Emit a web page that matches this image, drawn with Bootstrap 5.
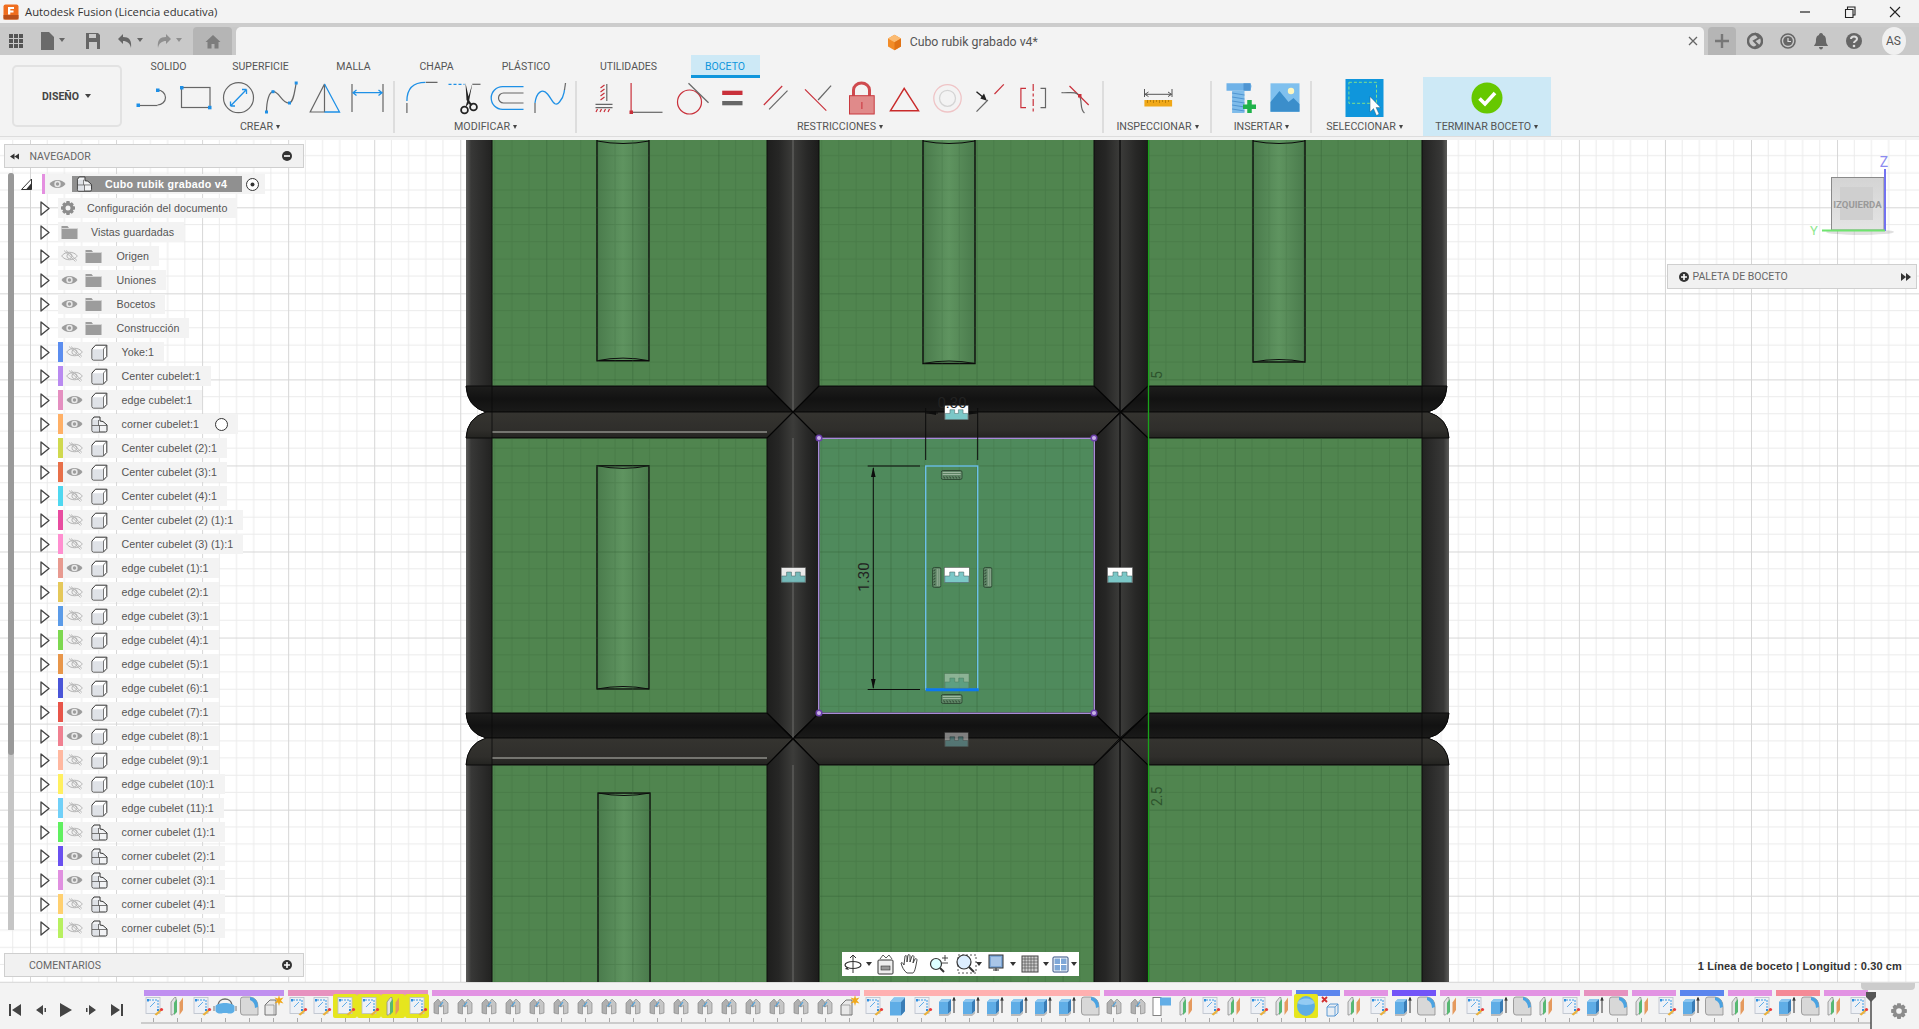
<!DOCTYPE html>
<html lang="es">
<head>
<meta charset="utf-8">
<title>Autodesk Fusion</title>
<link href="https://cdn.jsdelivr.net/npm/bootstrap@5.3.0/dist/css/bootstrap.min.css" rel="stylesheet">
<style>
html,body{height:100%;overflow:hidden}
body{background:#f3f3f3;font-family:"Liberation Sans",Arial,sans-serif;color:#555}
.titlebar{height:23px;flex:none;background:#f3f3f3;font:11.3px "Open Sans","Liberation Sans",sans-serif;color:#333;padding-left:3px}
.titlebar .wtxt{margin-left:6px}
.winbtns{margin-left:auto}
.winbtns svg{width:14px;height:14px;display:block}
.winbtns{gap:31px;padding-right:17px}
.band{height:4px;flex:none;background:#ccc}
.tabrow{height:28px;flex:none;background:#c9c9c9}
.qa{width:236px;flex:none;padding-left:8px}
.qa svg{display:block}
.sv1{margin-left:19px}
.rd1{margin-left:9px}
.homet{width:39px;height:28px;background:#b5b5b5;border-radius:4px 4px 0 0;margin-left:auto;margin-right:4px}
.doct{flex:1;background:#f3f3f3;border-radius:5px 5px 0 0;position:relative;font:12.3px Roboto,sans-serif;color:#555;padding-right:15px;padding-top:2px}
.doct .xclose{position:absolute;right:6px;top:9px}
.plust{width:28px;height:28px;background:#b5b5b5;border-radius:4px 4px 0 0;margin-left:4px}
.rtools{width:183.5px;flex:none;padding-left:11px;gap:17px}
.avatar{width:24px;height:28px;border-radius:50%;background:#f0f0f0;font:12px Roboto,sans-serif;color:#555;margin-left:3px}
.toolbar{height:82px;flex:none;background:#f3f3f3;border-bottom:1px solid #ddd;position:relative}
.tgap{height:3px;flex:none;background:#f3f3f3}
.designbtn{width:110px;height:62px;margin:10px 0 0 11.5px;border:2px solid #e2e2e2;border-radius:5px;background:#f3f3f3;font:bold 10.5px Roboto,sans-serif;color:#444;flex:none;padding:0}
.caret-d{display:inline-block;border-left:3px solid transparent;border-right:3px solid transparent;border-top:4px solid #444;margin-left:6px;vertical-align:2px}
.rcol{flex:none}
.rtabs{height:22px;margin-left:1px;font:10.5px Roboto,sans-serif;flex-wrap:nowrap}
.rtabs li{text-align:center;line-height:23px;color:#555}
.rtabs li:nth-child(1){width:92px}
.rtabs li:nth-child(2){width:92px}
.rtabs li:nth-child(3){width:94px}
.rtabs li:nth-child(4){width:72px}
.rtabs li:nth-child(5){width:107px}
.rtabs li:nth-child(6){width:98px;margin-right:13px}
.rtabs li:nth-child(7){width:69px;background:#cde9f6;color:#0f96dc;border-bottom:3px solid #0f96dc;height:23px}
.ribbon{padding-left:9.5px;height:59px}
.rgrp{flex:none;padding-top:3px}
.rgrp .ics{height:36px}
.rlbl{font:10.7px Roboto,sans-serif;color:#555;text-align:center;line-height:14px;margin-top:4px;white-space:nowrap}
.ccar{display:inline-block;border-left:2.5px solid transparent;border-right:2.5px solid transparent;border-top:4px solid #444;margin-left:3px;vertical-align:1px}
.ri{width:43px;height:36px;overflow:visible;display:block;flex:none}
.rsep{width:2px;flex:none;background:#ddd;margin:4px 5px 3px 3.5px}
.w1{width:258px}.w2{width:172px}.w3{width:516px}.w4{width:98px}.w5{width:89px}.w6{width:96px}
.w5 .ics{padding-left:3px}
.finish{width:128.5px;margin-left:10px;background:#cde9f6;flex:none}
.finish .ics{padding-top:2px}
.g{stroke:#666;fill:none;stroke-width:1.2}
.bl{stroke:#1e90e6;fill:none;stroke-width:1.3}
.rd{stroke:#c9303a;fill:none;stroke-width:1.2}
.bs{fill:#1e8fe6}
.main{flex:1;position:relative;overflow:hidden;background:#fff;min-height:0}
.scene{position:absolute;left:0;top:0;width:1919px;height:842px;display:block}
.panelhd{position:absolute;left:4px;width:300px;height:24px;background:#f1f1f1;border:1px solid #cfcfcf;font:10.5px Roboto,sans-serif;color:#666;padding:0 11px 0 4.5px}
.navh{top:4px}
.navh span{margin-left:11px}
.comh{top:813px;padding-left:24px}
.palh{position:absolute;left:1666.5px;top:124px;width:250px;height:25px;background:#f1f1f1;border:1px solid #cfcfcf;font:10.5px Roboto,sans-serif;color:#666;padding:0 5px 0 11px}
.tree{position:absolute;left:0;top:34px;font-size:10.7px;letter-spacing:.05px;color:#555}
.tbar{position:absolute;left:8px;top:33px;width:6px;height:757px;background:#c5c5c5;border-radius:3px 3px 0 0}
.tbar i{display:block;height:582px;background:#999;border-radius:3px}
.trow{height:20px;margin-bottom:4px;margin-left:40px;white-space:nowrap}
.trow .car{width:10px;height:15px;margin-right:8px;flex:none}
.tb{height:20px;background:#f3f3f3;padding-right:10px}
.cbar{width:5px;height:20px;flex:none}
.eye0{width:17px;height:12px;margin-left:2.5px;flex:none}
.bd0{width:17px;height:17px;margin-left:8px;margin-right:14px;flex:none}
.fe{width:17px;height:12px;margin-left:3px;flex:none}
.fo{width:17px;height:15px;margin-left:7px;margin-right:14.5px;flex:none}
.fo2{width:17px;height:15px;margin-left:3px;margin-right:13px;flex:none}
.ge{width:16px;height:16px;margin-left:2px;margin-right:11px;flex:none}
.rootrow{height:20px;margin-bottom:4px;margin-left:21px}
.rootcar{width:11px;height:12px;margin-right:10px;flex:none}
.rootb{height:20px;background:#f3f3f3;width:223px}
.rootsel{width:170px;height:16px;background:#909090;color:#fff;font-weight:bold;letter-spacing:.28px;margin-left:6px;flex:none}
.rootsel span{margin-left:12px}
.navbar3d{position:absolute;left:842px;top:812px;width:237px;height:24px;background:#fff;gap:0;padding-left:0}
.statusx{position:absolute;right:17px;top:820px;font:bold 11px "Liberation Sans",sans-serif;color:#333;white-space:nowrap;letter-spacing:.13px}
.tline{height:47px;flex:none;background:#f3f3f3;border-top:1px solid #ddd;position:relative}
.tctl{width:144px;flex:none;padding:19px 0 0 8px;gap:9px}
.tctl svg{width:16px;height:16px;display:block;flex:none}
.ttrack{width:1730px;flex:none;position:relative;padding-top:7px}
.tbars{gap:4px;height:6px}
.tbars span{display:block;height:6px;flex:none}
.n2{width:44px}.n6{width:140px}.n8{width:188px}.n10{width:236px}.n18{width:428px}
.ticons{margin-top:-2px;margin-left:-3px;height:30px;border-bottom:2px solid #ccc;width:1730px;position:relative}
.ti{width:24.03px;height:24px;flex:none;position:relative;display:block}
.ti svg{width:24px;height:24px;display:block}
.ti::after{content:"";position:absolute;left:11.5px;top:24px;width:1px;height:4px;background:#aaa}
.ti.hl{background:#e6e61e;border-radius:2px}
.playh{position:absolute;left:1864.5px;top:9px;width:12px;height:38px}
.gearx{margin-left:16px;margin-top:19px;width:18px;height:18px;flex:none}
.thumb{position:absolute;left:1861px;top:0;width:54px;height:7px;background:#ccc;border-radius:0 0 4px 4px}
</style>
</head>
<body class="d-flex flex-column vh-100 m-0">

<svg width="0" height="0" class="position-absolute">
<defs>
<symbol id="eye" viewBox="0 0 17 12"><path d="M.5 6C4 .8 13 .8 16.5 6 13 11.2 4 11.2.5 6Z" fill="#9c9c9c"/><circle cx="8.5" cy="6" r="3.2" fill="#e8e8e8"/><circle cx="8.5" cy="6" r="1.7" fill="#9c9c9c"/></symbol>
<symbol id="eyo" viewBox="0 0 17 12"><path d="M.7 6C4 1 13 1 16.3 6 13 11 4 11 .7 6Z" fill="none" stroke="#b5b5b5" stroke-width="1"/><circle cx="8.5" cy="6" r="2.6" fill="none" stroke="#b5b5b5"/><path d="M3 .5 14.500 11.500M5 .5 16 10.500" stroke="#b5b5b5" stroke-width=".9"/></symbol>
<symbol id="bx" viewBox="0 0 17 17"><path d="M1 5 4.500 1.200H15.800V12.500L12.500 16H2.500Q1 16 1 14.500Z" fill="#fff" stroke="#333" stroke-width="1" stroke-linejoin="round"/><path d="M1.500 5.300H12.500V15.500H2.500Q1.500 15.500 1.500 14.500Z" fill="#dfe2e7"/><path d="M12.500 5 15.800 1.500M12.500 5V16" fill="none" stroke="#555" stroke-width=".8"/></symbol>
<symbol id="cn" viewBox="0 0 17 17"><path d="M1 3.500 3 1H9V5L12 5.500 16 9V14.500Q16 16 14.500 16H2.500Q1 16 1 14.500Z" fill="#f2f3f5" stroke="#333" stroke-width="1" stroke-linejoin="round"/><path d="M1.500 9.500H8.500V15.500H2.500Q1.500 15.500 1.500 14.500ZM1.500 4H7.500V9H1.500Z" fill="#dfe2e7"/><path d="M1 9.500H16M8.500 9.500V16M7.500 4V9.500" fill="none" stroke="#555" stroke-width=".8"/></symbol>
<symbol id="fld" viewBox="0 0 17 15"><path d="M.5 1H6.500L8 3H16.500V14H.5Z" fill="#9c9c9c"/><path d="M.5 3.500H16.500" stroke="#eee" stroke-width=".7"/></symbol>
<symbol id="car" viewBox="0 0 10 15"><path d="M1 1 9 7.500 1 14Z" fill="#fff" stroke="#444" stroke-width="1.300" stroke-linejoin="round"/></symbol>
<symbol id="gear" viewBox="0 0 16 16"><path d="M6.500 1H9.500L10 3.200 11.800 2.200 13.800 4.200 12.800 6 15 6.500V9.500L12.800 10 13.800 11.800 11.800 13.800 10 12.800 9.500 15H6.500L6 12.800 4.200 13.800 2.200 11.800 3.200 10 1 9.500V6.500L3.200 6 2.200 4.200 4.200 2.200 6 3.200ZM8 5.500A2.500 2.500 0 1 0 8 10.500 2.500 2.500 0 1 0 8 5.500Z" fill="#8c8c8c" fill-rule="evenodd"/></symbol>

<symbol id="tsk" viewBox="0 0 24 24"><rect x="5" y="3.500" width="14" height="16" fill="#eef1f6" stroke="#b9bfca" stroke-width=".8"/><path d="M7 8V6H17V16" fill="none" stroke="#3b9ae4" stroke-width="1" stroke-dasharray="2 1"/><path d="M9 13 14 8" stroke="#3b9ae4" stroke-width=".8"/><rect x="6" y="5" width="2" height="2" fill="#2f8fe0"/><rect x="16" y="15" width="2" height="2" fill="#2f8fe0"/><path d="M13.500 20.500 19 15.500 20.500 17 15.500 21.500Z" fill="#eab13c"/><circle cx="20.500" cy="15.500" r="1.600" fill="#ea3c3c"/></symbol>
<symbol id="tsp" viewBox="0 0 24 24"><path d="M6 8 9.500 3.500H11V17L7.500 21H6Z" fill="#e2e3e5" stroke="#8e8e8e" stroke-width=".8"/><path d="M9 8.500 12 5V18L9 21Z" fill="#58b873"/><path d="M14.500 8.500 18 3.500V16L14.500 21Z" fill="#e59a5e"/></symbol>
<symbol id="tdm" viewBox="0 0 24 24"><path d="M5 11C6 3 18 3 19 11" fill="none" stroke="#6a6a6a" stroke-width="1.400"/><path d="M2.500 12C5 8 19 8 21.500 12V17C20 20 16 20 14 19H10C8 20 4 20 2.500 17Z" fill="#5daee6"/><path d="M1 12V17M23 12V17" stroke="#777"/></symbol>
<symbol id="tfl" viewBox="0 0 24 24"><path d="M3.500 5.500Q3.500 3 6 3H13Q21 4 21 13V21H6Q3.500 21 3.500 18Z" fill="#d8d8d8" stroke="#8a8a8a" stroke-width=".8"/><path d="M13 3Q21 4 21 13L18 14Q18 8 13 6Z" fill="#4aa3e2"/></symbol>
<symbol id="tst" viewBox="0 0 24 24"><path d="M4 11 9 6H15V21H4Z" fill="#e8e8e8" stroke="#666" stroke-width=".9"/><path d="M4 11H13V21" fill="none" stroke="#888" stroke-width=".7"/><path d="M18 1 19 4.500 22.500 3.500 20 6.500 22.500 9.500 19 8.500 18 12 17 8.500 13.500 9.500 16 6.500 13.500 3.500 17 4.500Z" fill="#f0a81a"/></symbol>
<symbol id="tm" viewBox="0 0 24 24"><path d="M5 19V9L9 5 12 8.500V13L9.500 11.500V20Z" fill="#b0b0b0" stroke="#8a8a8a" stroke-width=".7" stroke-linejoin="round"/><path d="M19 19V9L15 5 12 8.500V13L14.500 11.500V20Z" fill="#c6c6c6" stroke="#8a8a8a" stroke-width=".7" stroke-linejoin="round"/><path d="M10.500 12.500 14 8" stroke="#4aa3e2" stroke-width="1.100"/></symbol>
<symbol id="tcb" viewBox="0 0 24 24"><path d="M5 8 9 3.500H20V17L16 21.500H5Z" fill="#5fade6"/><path d="M16 8V21.500L20 17V3.500Z" fill="#3a7db6"/><path d="M5 8H16L20 3.500H9Z" fill="#8cc6ef"/></symbol>
<symbol id="tex" viewBox="0 0 24 24"><path d="M5 8 8 5H17V17L14 20H5Z" fill="#5fade6"/><path d="M14 8V20L17 17V5Z" fill="#3a7db6"/><path d="M5 8H14L17 5H8Z" fill="#8cc6ef"/><path d="M5 20H14L17 17V19.500L14 22H5Z" fill="#bbb"/><path d="M20 19V5M18.800 6.500 20 3.500 21.200 6.500" stroke="#333" stroke-width="1" fill="#333"/></symbol>
<symbol id="tfg" viewBox="0 0 24 24"><rect x="3" y="3.500" width="8" height="18" fill="#fff" stroke="#777" stroke-width=".9"/><rect x="10" y="3.500" width="11" height="8" fill="#63aee6"/></symbol>
<symbol id="tsh" viewBox="0 0 24 24"><ellipse cx="12" cy="12" rx="9" ry="10" fill="#5fade6"/><path d="M3.500 9C5 3 19 3 20.500 9 18 11.500 6 11.500 3.500 9Z" fill="#93cbf3"/></symbol>
<symbol id="tdl" viewBox="0 0 24 24"><path d="M4 3 9 8M9 3 4 8" stroke="#d23030" stroke-width="1.800"/><path d="M9 13 12 10H20V19L17 22H9Z" fill="#e9eef3" stroke="#4a8fd0" stroke-width=".9"/><path d="M9 13H17V22M17 13 20 10" fill="none" stroke="#4a8fd0" stroke-width=".8"/></symbol>

<symbol id="tag" viewBox="0 0 26 16"><rect x=".5" y=".5" width="25" height="15" fill="#fff" stroke="#555" stroke-width=".5"/><path d="M1 15.500V9H6V5H11V9H15V5H20V9H25V15.500Z" fill="#7cc8c8" stroke="#3d5a5a" stroke-width=".5"/></symbol>
<symbol id="hz" viewBox="0 0 22 10"><rect x=".5" y=".5" width="21" height="9" rx="2" fill="#5e8465" stroke="#2b4631" stroke-width=".9"/><path d="M2 2.500H20M2 4.500H20" stroke="#b9cbb9" stroke-width=".7"/><path d="M3 6.500 4 8.500M6 6.500 7 8.500M9 6.500 10 8.500M12 6.500 13 8.500M15 6.500 16 8.500M18 6.500 19 8.500" stroke="#1f3525" stroke-width=".8"/></symbol>
<symbol id="vt" viewBox="0 0 10 22"><rect x=".5" y=".5" width="9" height="21" rx="2" fill="#5e8465" stroke="#2b4631" stroke-width=".9"/><path d="M7.500 2V20M5.500 2V20" stroke="#b9cbb9" stroke-width=".7"/><path d="M3.500 3 1.500 4M3.500 6 1.500 7M3.500 9 1.500 10M3.500 12 1.500 13M3.500 15 1.500 16M3.500 18 1.500 19" stroke="#1f3525" stroke-width=".8"/></symbol>

<pattern id="gridP" patternUnits="userSpaceOnUse" x="30" y="207.300" width="86.050" height="86.050">
<path d="M17.200 0V86.050M34.400 0V86.050M51.600 0V86.050M68.800 0V86.050M0 17.200H86.050M0 34.400H86.050M0 51.600H86.050M0 68.800H86.050" stroke="#ebebeb" stroke-width="1"/>
<path d="M.5 0V86.050M0 .5H86.050" stroke="#d6d6d6" stroke-width="1"/>
</pattern>
<pattern id="gridG" patternUnits="userSpaceOnUse" x="30" y="207.300" width="86.050" height="86.050">
<path d="M17.200 0V86.050M34.400 0V86.050M51.600 0V86.050M68.800 0V86.050M0 17.200H86.050M0 34.400H86.050M0 51.600H86.050M0 68.800H86.050" stroke="#2c5a2f" stroke-opacity=".22" stroke-width="1"/>
<path d="M.5 0V86.050M0 .5H86.050" stroke="#2c5a2f" stroke-opacity=".4" stroke-width="1"/>
</pattern>
<linearGradient id="vL" x1="0" x2="1" y1="0" y2="0"><stop offset="0" stop-color="#1e1e1d"/><stop offset=".45" stop-color="#262625"/><stop offset="1" stop-color="#3c3c3a"/></linearGradient>
<linearGradient id="vR" x1="0" x2="1" y1="0" y2="0"><stop offset="0" stop-color="#3c3c3a"/><stop offset=".55" stop-color="#282827"/><stop offset="1" stop-color="#1c1c1b"/></linearGradient>
<linearGradient id="vE" x1="0" x2="1" y1="0" y2="0"><stop offset="0" stop-color="#5c5c5a"/><stop offset=".2" stop-color="#383837"/><stop offset="1" stop-color="#222221"/></linearGradient>
<linearGradient id="vF" x1="0" x2="1" y1="0" y2="0"><stop offset="0" stop-color="#222221"/><stop offset=".8" stop-color="#383837"/><stop offset="1" stop-color="#5c5c5a"/></linearGradient>
<linearGradient id="hT" x1="0" x2="0" y1="0" y2="1"><stop offset="0" stop-color="#1d1d1c"/><stop offset=".5" stop-color="#121212"/><stop offset="1" stop-color="#1a1a19"/></linearGradient>
<linearGradient id="hB" x1="0" x2="0" y1="0" y2="1"><stop offset="0" stop-color="#353430"/><stop offset=".7" stop-color="#2f2e2b"/><stop offset="1" stop-color="#232320"/></linearGradient>
<linearGradient id="slotG" x1="0" x2="1" y1="0" y2="0"><stop offset="0" stop-color="#4a7b4c"/><stop offset=".5" stop-color="#5f9460"/><stop offset="1" stop-color="#4a7b4c"/></linearGradient>
<linearGradient id="cubeG" x1="0" x2="0" y1="0" y2="1"><stop offset="0" stop-color="#d4d4d4"/><stop offset="1" stop-color="#e4e4e4"/></linearGradient>
</defs>
</svg>

<header class="titlebar d-flex align-items-center">
<svg width="16" height="16" viewBox="0 0 16 16"><rect x=".5" y=".5" width="15" height="15" rx="2" fill="#ef6d1e"/><rect x=".5" y="11" width="15" height="4.500" fill="#b9501a"/><path d="M5 3H11V5H7.300V6.500H10.500V8.500H7.300V10.500H5Z" fill="#fff"/></svg>
<span class="wtxt">Autodesk Fusion (Licencia educativa)</span>
<div class="winbtns d-flex align-items-center">
<svg viewBox="0 0 14 14"><path d="M2 7H12" stroke="#222" stroke-width="1.200"/></svg>
<svg viewBox="0 0 14 14"><path d="M2.500 4.500H10V12.500H2.500ZM4.500 4.500V2H12V10H10" fill="none" stroke="#222" stroke-width="1.100"/></svg>
<svg viewBox="0 0 14 14"><path d="M2 2 12 12M12 2 2 12" stroke="#222" stroke-width="1.100"/></svg>
</div>
</header>
<div class="band"></div>
<div class="tabrow d-flex">
<div class="qa d-flex align-items-center">
<svg width="16" height="16" viewBox="0 0 16 16"><path d="M1 1h4v4H1zM6 1h4v4H6zM11 1h4v4h-4zM1 6h4v4H1zM6 6h4v4H6zM11 6h4v4h-4zM1 11h4v4H1zM6 11h4v4H6zM11 11h4v4h-4z" fill="#555"/></svg>
<svg class="ms-3" width="26" height="20" viewBox="0 0 26 20"><path d="M1 1H9L14 6V19H1Z" fill="#6a6a6a"/><path d="M19 7H25L22 11Z" fill="#666"/></svg>
<svg class="sv1" width="16" height="18" viewBox="0 0 16 18"><path d="M1 1H13L15 3V17H1Z" fill="#666"/><rect x="4" y="2" width="7" height="4" fill="#c9c9c9"/><rect x="4" y="10" width="8" height="7" fill="#c9c9c9"/></svg>
<svg class="ms-3" width="30" height="18" viewBox="0 0 30 18"><path d="M1 7 6 2V5C12 5 15 8 14 16 13 11 10 9 6 9V12Z" fill="#666"/><path d="M20 6H26L23 10Z" fill="#666"/></svg>
<svg class="rd1" width="30" height="18" viewBox="0 0 30 18"><path d="M15 7 10 2V5C4 5 1 8 2 16 3 11 6 9 10 9V12Z" fill="#8f8f8f"/><path d="M20 6H26L23 10Z" fill="#8f8f8f"/></svg>
<div class="homet d-flex align-items-center justify-content-center"><svg width="16" height="15" viewBox="0 0 16 15"><path d="M8 1 15.500 8H13.500V14.500H9.500V10H6.500V14.500H2.500V8H.5Z" fill="#7d7d7d"/></svg></div>
</div>
<div class="doct d-flex align-items-center justify-content-center">
<svg class="me-1" width="15" height="17" viewBox="0 0 15 17"><path d="M7.500.8 14 4.500V12.500L7.500 16.200 1 12.500V4.500Z" fill="#f28c28"/><path d="M7.500.8 14 4.500 7.500 8.200 1 4.500Z" fill="#fbbb72"/><path d="M7.500 8.200V16.200L14 12.500V4.500Z" fill="#e07316"/></svg>
<span class="ms-1">Cubo rubik grabado v4*</span>
<svg class="xclose" width="10" height="10" viewBox="0 0 10 10"><path d="M1 1 9 9M9 1 1 9" stroke="#666" stroke-width="1.300"/></svg>
</div>
<div class="plust d-flex align-items-center justify-content-center"><svg width="14" height="14" viewBox="0 0 14 14"><path d="M7 0V14M0 7H14" stroke="#777" stroke-width="2.400"/></svg></div>
<div class="rtools d-flex align-items-center">
<svg width="16" height="18" viewBox="0 0 16 18"><circle cx="8" cy="9" r="7" fill="none" stroke="#666" stroke-width="2.400"/><path d="M8 1 12 6 7 9 11 13 7 16" fill="none" stroke="#666" stroke-width="2"/></svg>
<svg width="16" height="18" viewBox="0 0 16 18"><circle cx="8" cy="9" r="7" fill="none" stroke="#666" stroke-width="1.600"/><circle cx="8" cy="9" r="4.800" fill="#666"/><path d="M8 6V9.500H11" fill="none" stroke="#ddd" stroke-width="1.200"/></svg>
<svg width="16" height="18" viewBox="0 0 16 18"><path d="M8 1C9.500 1 10 2 10 3 13 4 13 7 13 9 13 12 15 13 15 14H1C1 13 3 12 3 9 3 7 3 4 6 3 6 2 6.500 1 8 1ZM6 15H10C10 16.500 9 17.500 8 17.500S6 16.500 6 15Z" fill="#666"/></svg>
<svg width="16" height="18" viewBox="0 0 16 18"><circle cx="8" cy="9" r="8" fill="#666"/><path d="M5 7C5 3.500 11 3.500 11 7 11 9 8 9 8 11" fill="none" stroke="#ddd" stroke-width="2"/><circle cx="8" cy="14" r="1.300" fill="#ddd"/></svg>
<div class="avatar d-flex align-items-center justify-content-center">AS</div>
</div>
</div>

<section class="toolbar d-flex">
<button type="button" class="designbtn">DISEÑO<span class="caret-d"></span></button>
<div class="rcol">
<ul class="nav rtabs">
<li>SOLIDO</li><li>SUPERFICIE</li><li>MALLA</li><li>CHAPA</li><li>PLÁSTICO</li><li>UTILIDADES</li><li>BOCETO</li>
</ul>
<div class="ribbon d-flex">
<div class="rgrp w1">
<div class="ics d-flex">
<svg class="ri" viewBox="-1.500 0 43 36"><path class="g" d="M6 25.500H25"/><path class="g" d="M25 10A8 7.500 0 0 1 25 25"/><rect class="bs" x="4" y="23.500" width="3.500" height="3.500"/><rect class="bs" x="23.500" y="8.500" width="3.500" height="3.500"/></svg>
<svg class="ri" viewBox="-1.500 0 43 36"><rect class="g" x="6" y="7.500" width="28.500" height="20"/><rect class="bs" x="4.500" y="6" width="3.500" height="3.500"/><rect class="bs" x="32.500" y="25.800" width="3.500" height="3.500"/></svg>
<svg class="ri" viewBox="-1.500 0 43 36"><circle class="g" cx="20" cy="17.700" r="15"/><path class="bl" d="M12 26 28 9.500M28 9.500H23.500M28 9.500V14M12 26H16.500M12 26V21.500"/></svg>
<svg class="ri" viewBox="-1.500 0 43 36"><path class="g" d="M5 32C5 20 8 12 11.500 11.700 18 11 20 24 28 23 32 22 33 12 34.700 3"/><rect class="bs" x="3.500" y="30.500" width="3" height="3"/><rect class="bs" x="10" y="10.200" width="3" height="3"/><rect class="bs" x="26.500" y="21.500" width="3" height="3"/><rect class="bs" x="33.200" y="1.500" width="3" height="3"/></svg>
<svg class="ri" viewBox="-1.500 0 43 36"><path class="g" d="M20 4 5.700 32H20Z"/><path class="bl" d="M20 4 35 32H20"/></svg>
<svg class="ri" viewBox="-1.500 0 43 36"><path class="g" d="M4.500 4V32M35.500 4V32"/><path class="bl" d="M5.500 12.700H34.500M9 10 5.500 12.700 9 15.400M31 10 34.500 12.700 31 15.400"/></svg>
</div>
<div class="rlbl">CREAR<span class="ccar"></span></div>
</div>
<div class="rsep"></div>
<div class="rgrp w2">
<div class="ics d-flex">
<svg class="ri" viewBox="-1.500 0 43 36"><path class="bl" d="M5.400 21Q5.400 2.300 24 2.300"/><path class="g" d="M24.500 2.300H36M5.400 23V33"/></svg>
<svg class="ri" viewBox="-1.500 0 43 36"><path class="bl" d="M4 4.300H20" stroke-dasharray="3 2"/><path class="g" d="M28 4.300H36"/><path d="M21 3 25 21 28 25 26 26 22 20ZM28 3 26 13 24 24 21 27 23 20Z" fill="#222"/><circle cx="20" cy="30" r="3.400" fill="none" stroke="#222" stroke-width="1.800"/><circle cx="29" cy="27" r="3.400" fill="none" stroke="#222" stroke-width="1.800"/></svg>
<svg class="ri" viewBox="-1.500 0 43 36"><path class="bl" stroke-width="1.600" d="M36 6.700H15A11.300 11.300 0 0 0 15 29.300H36"/><path class="g" d="M36 13H16A5 5 0 0 0 16 23H36"/></svg>
<svg class="ri" viewBox="-1.500 0 43 36"><path class="g" d="M4.500 33V23"/><path class="bl" d="M4.500 23C6 12 12 8 17 14S24 28 29 22 33 14 34 10"/><path class="g" d="M34 10 35 3"/></svg>
</div>
<div class="rlbl">MODIFICAR<span class="ccar"></span></div>
</div>
<div class="rsep"></div>
<div class="rgrp w3">
<div class="ics d-flex">
<svg class="ri" viewBox="-1.500 0 43 36"><path class="g" d="M23.300 4V21"/><path class="rd" d="M21 5 17 8M21 9 17 12M21 13 17 16M21 17 17 20"/><path d="M12 24.300H29M12 27.700H29" stroke="#666" stroke-width="1.300"/><path class="rd" d="M14 29 12.500 32M18 29 16.500 32M22 29 20.500 32M26 29 24.500 32"/></svg>
<svg class="ri" viewBox="-1.500 0 43 36"><path class="rd" d="M4.600 3V31"/><path class="g" d="M5 32.300H36"/><rect x="3" y="30.500" width="3.500" height="3.500" fill="#c9303a"/></svg>
<svg class="ri" viewBox="-1.500 0 43 36"><circle class="rd" cx="20" cy="22" r="12"/><path class="g" d="M19 3.300 39 22.700"/></svg>
<svg class="ri" viewBox="-1.500 0 43 36"><rect x="9.700" y="10.700" width="20.300" height="4.300" fill="#c9303a"/><rect x="9.700" y="21" width="20.300" height="4.300" fill="#666"/></svg>
<svg class="ri" viewBox="-1.500 0 43 36"><path class="rd" d="M8.300 25 26.700 6"/><path class="g" d="M13.600 29.300 32 10.700"/></svg>
<svg class="ri" viewBox="-1.500 0 43 36"><path class="rd" d="M6.500 9.300 27.800 30.700"/><path class="g" d="M19.600 20 32.600 5.700"/></svg>
<svg class="ri" viewBox="-1.500 0 43 36"><path d="M12 16V10A8 7 0 0 1 28 10V16" fill="none" stroke="#cf4a4e" stroke-width="3"/><rect x="8" y="15.700" width="24.700" height="18.300" fill="#e08a8a" stroke="#c9393f"/><path d="M20.400 22V29" stroke="#c9303a"/></svg>
<svg class="ri" viewBox="-1.500 0 43 36"><path d="M19.700 8.300 6 30.700H34Z" fill="none" stroke="#c92a2a" stroke-width="1.500"/></svg>
<svg class="ri" viewBox="-1.500 0 43 36"><circle cx="20" cy="18.300" r="13.700" fill="none" stroke="#efc4c6" stroke-width="1.300"/><circle cx="20" cy="18.300" r="8" fill="none" stroke="#d4d4d4" stroke-width="1.300"/></svg>
<svg class="ri" viewBox="-1.500 0 43 36"><path class="rd" d="M24 14 33.300 4.300"/><path class="g" d="M6 31.700 17.400 20"/><path d="M6 11.700 13.500 18" stroke="#222" stroke-width="1.400"/><path d="M16.400 20.700 9.800 18.500 13.500 13.500Z" fill="#222"/></svg>
<svg class="ri" viewBox="-1.500 0 43 36"><path class="rd" d="M19.700 4V32" stroke-dasharray="7 2.500 3 2.500"/><path class="rd" d="M12.500 8.300H7.400V27.700H12.500"/><path class="g" d="M27 8.300H32V27.700H27"/></svg>
<svg class="ri" viewBox="-1.500 0 43 36"><path class="rd" d="M13 6 32.200 25"/><path class="g" d="M5 12.700C14 13 20 11 23 16 26 21 23 30 28 33"/><rect x="21.500" y="14" width="3.500" height="3.500" fill="#c9303a"/></svg>
</div>
<div class="rlbl">RESTRICCIONES<span class="ccar"></span></div>
</div>
<div class="rsep"></div>
<div class="rgrp w4">
<div class="ics d-flex justify-content-center">
<svg class="ri" viewBox="-1.500 0 43 36"><path d="M7 9V17M34.500 9V17" stroke="#555"/><path d="M7.500 14.300H34M11 12 7.500 14.300 11 16.600M30.500 12 34 14.300 30.500 16.600" fill="none" stroke="#555"/><rect x="6.900" y="20" width="27.700" height="6.500" fill="#f0a818"/><path d="M10 20V23M13 20V22M16 20V23M19 20V22M22 20V23M25 20V22M28 20V23M31 20V22" stroke="#a56f00" stroke-width=".7"/></svg>
</div>
<div class="rlbl">INSPECCIONAR<span class="ccar"></span></div>
</div>
<div class="rsep"></div>
<div class="rgrp w5">
<div class="ics d-flex">
<svg class="ri" viewBox="-1.500 0 43 36"><path d="M5 3.300H29L30 6 29 10.700H5Z" fill="#6fb2e8"/><path d="M22 3.300H29V10.700H22Z" fill="#4f95d2"/><rect x="10.600" y="10.700" width="12.400" height="22.300" fill="#7fbcea"/><path d="M10.600 13 23 15M10.600 17 23 19M10.600 21 23 23M10.600 25 23 27M10.600 29 23 31" stroke="#4f95d2"/><path d="M28 20V33M21.500 26.700H34.500" stroke="#1fb24a" stroke-width="4.500"/></svg>
<svg class="ri" viewBox="-1.500 0 43 36"><rect x="6" y="3.300" width="29" height="28.400" fill="#7fc0ee"/><path d="M6 22 15 11 24 22 29 18 35 24V31.700H6Z" fill="#3b8ecb"/><circle cx="26.500" cy="11" r="3.200" fill="#fdf6c0"/></svg>
</div>
<div class="rlbl">INSERTAR<span class="ccar"></span></div>
</div>
<div class="rsep"></div>
<div class="rgrp w6">
<div class="ics d-flex justify-content-center">
<svg class="ri" viewBox="-1.500 0 43 36"><rect x="1" y="-1" width="38" height="38" fill="#0f96dc"/><rect x="4.400" y="2.300" width="27.600" height="21" fill="none" stroke="#7fe08a" stroke-width="1" stroke-dasharray="3 2"/><path d="M25.600 16.700V32L29 28.500 32 35.500 34.500 34 31.500 27.500H36Z" fill="#fff" stroke="#333" stroke-width=".3"/></svg>
</div>
<div class="rlbl">SELECCIONAR<span class="ccar"></span></div>
</div>
<div class="finish rgrp">
<div class="ics d-flex justify-content-center">
<svg width="32" height="32" viewBox="0 0 32 32"><circle cx="16" cy="16" r="15.500" fill="#66c800"/><path d="M8.500 16.500 14 22 24 11" fill="none" stroke="#fff" stroke-width="3.600"/></svg>
</div>
<div class="rlbl">TERMINAR BOCETO<span class="ccar"></span></div>
</div>
</div>
</div>
</section>
<div class="tgap"></div>

<main class="main">
<svg class="scene" viewBox="0 140 1919 842" xmlns="http://www.w3.org/2000/svg">
<rect x="0" y="137" width="1919" height="845" fill="#fff"/>
<rect x="0" y="137" width="1919" height="845" fill="url(#gridP)"/>
<path d="M466 137H1447V386Q1446 407 1428 412Q1448 418 1449 438V713Q1448 733 1428 738Q1448 744 1449 765V982H466V765Q467 744 486 738Q467 733 466 713V438Q467 418 486 412Q467 407 466 386Z" fill="#1c1c1b"/>
<g>
<rect x="466" y="137" width="26" height="249" fill="url(#vE)"/>
<rect x="466" y="438" width="26" height="275" fill="url(#vE)"/>
<rect x="466" y="765" width="26" height="217" fill="url(#vE)"/>
<rect x="767" y="137" width="26" height="845" fill="url(#vL)"/>
<rect x="793" y="137" width="26" height="845" fill="url(#vR)"/>
<rect x="1094" y="137" width="26" height="845" fill="url(#vL)"/>
<rect x="1120" y="137" width="28" height="845" fill="url(#vR)"/>
<rect x="1422" y="137" width="25" height="249" fill="url(#vF)"/>
<rect x="1422" y="438" width="27" height="275" fill="url(#vF)"/>
<rect x="1422" y="765" width="27" height="217" fill="url(#vF)"/>
</g>
<g stroke="#0a0a0a" stroke-width="1">
<path fill="url(#hT)" d="M466 386H767L793 412H486Q467 407 466 386Z"/>
<path fill="url(#hT)" d="M819 386H1094L1120 412H793Z"/>
<path fill="url(#hT)" d="M1148 386H1447Q1446 407 1428 412H1120Z"/>
<path fill="url(#hB)" d="M486 412H793L767 438H466Q467 418 486 412Z"/>
<path fill="url(#hB)" d="M793 412H1120L1094 438H819Z"/>
<path fill="url(#hB)" d="M1120 412H1428Q1448 418 1449 438H1148Z"/>
<path fill="url(#hT)" d="M466 713H767L793 738H486Q467 733 466 713Z"/>
<path fill="url(#hT)" d="M819 713H1094L1120 738H793Z"/>
<path fill="url(#hT)" d="M1148 713H1449Q1448 733 1428 738H1120Z"/>
<path fill="url(#hB)" d="M486 738H793L767 765H466Q467 744 486 738Z"/>
<path fill="url(#hB)" d="M793 738H1120L1094 765H819Z"/>
<path fill="url(#hB)" d="M1120 738H1428Q1448 744 1449 765H1148Z"/>
</g>
<path d="M492 432H767M492 758H767" stroke="#8d8d88" stroke-width="1.300"/>
<path d="M793 137V412M793 438V738M793 765V982" stroke="#6a6a68" stroke-width="1"/>
<path d="M1120 137V982" stroke="#0a0a0a" stroke-width="1.300"/>
<path d="M492 386V438M1422 386V438M492 713V765M1422 713V765" stroke="#0a0a0a" stroke-width=".8"/>
<path d="M767 386 819 438M819 386 767 438M1094 386 1148 438M1148 386 1094 438M767 713 819 765M819 713 767 765M1094 713 1148 765M1148 713 1094 765" stroke="#050505" stroke-width="1.100"/>
<g stroke="#0c0c0c" stroke-width="1" fill="#50854f">
<rect x="492" y="136" width="275" height="250"/>
<rect x="819" y="136" width="275" height="250"/>
<rect x="1148" y="136" width="274" height="250"/>
<rect x="492" y="438" width="275" height="275"/>
<rect x="819" y="438" width="275" height="275" fill="#4f8a5c"/>
<rect x="1148" y="438" width="274" height="275"/>
<rect x="492" y="765" width="275" height="218"/>
<rect x="819" y="765" width="275" height="218"/>
<rect x="1148" y="765" width="274" height="218"/>
</g>
<g stroke="#0c0c0c" stroke-width="1.400" fill="url(#slotG)">
<path d="M597 136V360.700H649V136"/>
<path d="M923 136V363.500H975V136"/>
<path d="M1253 136V362H1305V136"/>
<rect x="597" y="465.700" width="52" height="223.300"/>
<path d="M598 983V793H650V983"/>
</g>
<g stroke="#0c0c0c" stroke-width="1" fill="none">
<path d="M597 360.700Q623 355.500 649 360.700M923 363.500Q949 358.500 975 363.500M1253 362Q1279 357 1305 362M597 465.700Q623 471 649 465.700M597 689Q623 684 649 689M598 793Q624 798 650 793M597 141Q623 146 649 141M923 141Q949 146 975 141M1253 141Q1279 146 1305 141"/>
</g>
<g fill="url(#gridG)">
<rect x="492" y="137" width="275" height="249"/><rect x="819" y="137" width="275" height="249"/><rect x="1148" y="137" width="274" height="249"/>
<rect x="492" y="438" width="275" height="275"/><rect x="819" y="438" width="275" height="275"/><rect x="1148" y="438" width="274" height="275"/>
<rect x="492" y="765" width="275" height="217"/><rect x="819" y="765" width="275" height="217"/><rect x="1148" y="765" width="274" height="217"/>
</g>
<path d="M1148.500 137V982" stroke="#1aa31a" stroke-width="1.300"/>
<text transform="translate(1162 379) rotate(-90)" font-family="Roboto,sans-serif" font-size="14" fill="#1f3f20" opacity=".7">5</text>
<text transform="translate(1162 806) rotate(-90)" font-family="Roboto,sans-serif" font-size="14" fill="#1f3f20" opacity=".7">2.5</text>

<rect x="818.700" y="438.300" width="275.600" height="275" fill="none" stroke="#a98ad8" stroke-width="1.400"/>
<g fill="#c7b2e6" stroke="#6b3fa8" stroke-width="1.500">
<circle cx="819" cy="438" r="2.800"/><circle cx="1094" cy="438" r="2.800"/><circle cx="819" cy="713" r="2.800"/><circle cx="1094" cy="713" r="2.800"/>
</g>
<rect x="925.700" y="466" width="52" height="223.500" fill="none" stroke="#6cc0e8" stroke-width="1.400"/>
<path d="M925.700 689.800H978.700" stroke="#0a78f0" stroke-width="3"/>
<g stroke="#0c0c0c" stroke-width="1" fill="none">
<path d="M867.700 466H920M867.700 689.500H920M873.300 468V688M925.700 408V460M977.700 408V460M925.700 413H938M964 413H977.700"/>
</g>
<g fill="#0c0c0c">
<path d="M873.300 467 871 477H875.600ZM873.300 689 871 679H875.600ZM926 413 936 411V415ZM977.500 413 967 411V415Z"/>
</g>
<use href="#tag" x="944" y="405" width="25" height="15"/>
<text x="952" y="408" text-anchor="middle" font-family="Roboto,sans-serif" font-size="15" fill="#222">0.30</text>
<text transform="translate(869 577) rotate(-90)" text-anchor="middle" font-family="Roboto,sans-serif" font-size="15" fill="#222">1.30</text>
<use href="#tag" x="943.500" y="567" width="26.500" height="16"/>
<use href="#tag" x="780.700" y="567" width="25.500" height="16" opacity=".9"/>
<use href="#tag" x="1107" y="567" width="26" height="16"/>
<use href="#tag" x="944" y="732" width="25" height="15" opacity=".45"/>
<use href="#tag" x="944" y="673" width="25.500" height="16" opacity=".35"/>
<use href="#hz" x="940.700" y="470" width="22" height="10"/>
<use href="#hz" x="940.700" y="694" width="22" height="10"/>
<use href="#vt" x="932" y="566.700" width="9.500" height="21.500"/>
<use href="#vt" x="983" y="566.700" width="9.500" height="21.500"/>

<ellipse cx="1860" cy="232" rx="34" ry="3" fill="#000" opacity=".12"/>
<rect x="1831.500" y="177.500" width="52.500" height="52.500" fill="url(#cubeG)" stroke="#8a8a8a"/>
<rect x="1840" y="187" width="33" height="33" fill="#cfcfcf"/>
<text x="1857.500" y="208" text-anchor="middle" font-family="Roboto,sans-serif" font-weight="700" font-size="9.600" fill="#9a9a9a">IZQUIERDA</text>
<path d="M1885 169V231" stroke="#7272f0" stroke-width="2"/>
<path d="M1822 230.500H1885" stroke="#6fe46f" stroke-width="2"/>
<text x="1884" y="167" text-anchor="middle" font-family="Roboto,sans-serif" font-size="14" fill="#8b8bf0">Z</text>
<text x="1814" y="235" text-anchor="middle" font-family="Roboto,sans-serif" font-size="13" fill="#8fe88f">Y</text>
</svg>

<div class="panelhd navh d-flex align-items-center">
<svg width="9" height="7" viewBox="0 0 12 8"><path d="M6 0V8L0 4ZM12 0V8L6 4Z" fill="#333"/></svg>
<span class="flex-grow-1">NAVEGADOR</span>
<svg width="10" height="10" viewBox="0 0 10 10"><circle cx="5" cy="5" r="5" fill="#333"/><path d="M2 5H8" stroke="#fff" stroke-width="1.600"/></svg>
</div>

<div class="tbar"><i></i></div>
<div class="tree">
<div class="rootrow d-flex align-items-center">
<svg class="rootcar" viewBox="0 0 11 12"><path d="M10.500 1V11.500H.5Z" fill="#fff" stroke="#333"/><path d="M10.500 5V11.500H5Z" fill="#333"/></svg>
<div class="rootb d-flex align-items-center"><span class="cbar" style="background:#e48fe0;width:3px"></span>
<svg width="17" height="12" class="ms-1 flex-none"><use href="#eye"/></svg>
<div class="rootsel d-flex align-items-center"><svg width="17" height="16" class="ms-1"><use href="#cn"/></svg><span>Cubo rubik grabado v4</span></div>
<svg class="ms-1" width="13" height="13" viewBox="0 0 13 13"><circle cx="6.500" cy="6.500" r="6" fill="#fff" stroke="#333"/><circle cx="6.500" cy="6.500" r="2" fill="#333"/></svg>
</div></div>

<div class="trow d-flex align-items-center"><svg class="car"><use href="#car"/></svg><div class="tb d-flex align-items-center"><svg class="ge"><use href="#gear"/></svg>Configuración del documento</div></div>
<div class="trow d-flex align-items-center"><svg class="car"><use href="#car"/></svg><div class="tb d-flex align-items-center"><svg class="fo2"><use href="#fld"/></svg>Vistas guardadas</div></div>
<div class="trow d-flex align-items-center"><svg class="car"><use href="#car"/></svg><div class="tb d-flex align-items-center"><svg class="fe"><use href="#eyo"/></svg><svg class="fo"><use href="#fld"/></svg>Origen</div></div>
<div class="trow d-flex align-items-center"><svg class="car"><use href="#car"/></svg><div class="tb d-flex align-items-center"><svg class="fe"><use href="#eye"/></svg><svg class="fo"><use href="#fld"/></svg>Uniones</div></div>
<div class="trow d-flex align-items-center"><svg class="car"><use href="#car"/></svg><div class="tb d-flex align-items-center"><svg class="fe"><use href="#eye"/></svg><svg class="fo"><use href="#fld"/></svg>Bocetos</div></div>
<div class="trow d-flex align-items-center"><svg class="car"><use href="#car"/></svg><div class="tb d-flex align-items-center"><svg class="fe"><use href="#eye"/></svg><svg class="fo"><use href="#fld"/></svg>Construcción</div></div>

<div class="trow d-flex align-items-center"><svg class="car"><use href="#car"/></svg><div class="tb d-flex align-items-center"><span class="cbar" style="background:#5b8def"></span><svg class="eye0"><use href="#eyo"/></svg><svg class="bd0"><use href="#bx"/></svg>Yoke:1</div></div>
<div class="trow d-flex align-items-center"><svg class="car"><use href="#car"/></svg><div class="tb d-flex align-items-center"><span class="cbar" style="background:#b98af0"></span><svg class="eye0"><use href="#eyo"/></svg><svg class="bd0"><use href="#bx"/></svg>Center cubelet:1</div></div>
<div class="trow d-flex align-items-center"><svg class="car"><use href="#car"/></svg><div class="tb d-flex align-items-center"><span class="cbar" style="background:#e48fc0"></span><svg class="eye0"><use href="#eye"/></svg><svg class="bd0"><use href="#bx"/></svg>edge cubelet:1</div></div>
<div class="trow d-flex align-items-center"><svg class="car"><use href="#car"/></svg><div class="tb d-flex align-items-center"><span class="cbar" style="background:#ffb066"></span><svg class="eye0"><use href="#eye"/></svg><svg class="bd0"><use href="#cn"/></svg>corner cubelet:1<svg class="ms-3" width="13" height="13" viewBox="0 0 13 13"><circle cx="6.500" cy="6.500" r="6" fill="#fff" stroke="#333"/></svg></div></div>
<div class="trow d-flex align-items-center"><svg class="car"><use href="#car"/></svg><div class="tb d-flex align-items-center"><span class="cbar" style="background:#d0d94f"></span><svg class="eye0"><use href="#eyo"/></svg><svg class="bd0"><use href="#bx"/></svg>Center cubelet (2):1</div></div>
<div class="trow d-flex align-items-center"><svg class="car"><use href="#car"/></svg><div class="tb d-flex align-items-center"><span class="cbar" style="background:#e8704a"></span><svg class="eye0"><use href="#eye"/></svg><svg class="bd0"><use href="#bx"/></svg>Center cubelet (3):1</div></div>
<div class="trow d-flex align-items-center"><svg class="car"><use href="#car"/></svg><div class="tb d-flex align-items-center"><span class="cbar" style="background:#4fd8f0"></span><svg class="eye0"><use href="#eyo"/></svg><svg class="bd0"><use href="#bx"/></svg>Center cubelet (4):1</div></div>
<div class="trow d-flex align-items-center"><svg class="car"><use href="#car"/></svg><div class="tb d-flex align-items-center"><span class="cbar" style="background:#e84ca0"></span><svg class="eye0"><use href="#eyo"/></svg><svg class="bd0"><use href="#bx"/></svg>Center cubelet (2) (1):1</div></div>
<div class="trow d-flex align-items-center"><svg class="car"><use href="#car"/></svg><div class="tb d-flex align-items-center"><span class="cbar" style="background:#ff8fd0"></span><svg class="eye0"><use href="#eyo"/></svg><svg class="bd0"><use href="#bx"/></svg>Center cubelet (3) (1):1</div></div>
<div class="trow d-flex align-items-center"><svg class="car"><use href="#car"/></svg><div class="tb d-flex align-items-center"><span class="cbar" style="background:#e89a90"></span><svg class="eye0"><use href="#eye"/></svg><svg class="bd0"><use href="#bx"/></svg>edge cubelet (1):1</div></div>
<div class="trow d-flex align-items-center"><svg class="car"><use href="#car"/></svg><div class="tb d-flex align-items-center"><span class="cbar" style="background:#e5c85a"></span><svg class="eye0"><use href="#eyo"/></svg><svg class="bd0"><use href="#bx"/></svg>edge cubelet (2):1</div></div>
<div class="trow d-flex align-items-center"><svg class="car"><use href="#car"/></svg><div class="tb d-flex align-items-center"><span class="cbar" style="background:#5b9be8"></span><svg class="eye0"><use href="#eyo"/></svg><svg class="bd0"><use href="#bx"/></svg>edge cubelet (3):1</div></div>
<div class="trow d-flex align-items-center"><svg class="car"><use href="#car"/></svg><div class="tb d-flex align-items-center"><span class="cbar" style="background:#7dd850"></span><svg class="eye0"><use href="#eyo"/></svg><svg class="bd0"><use href="#bx"/></svg>edge cubelet (4):1</div></div>
<div class="trow d-flex align-items-center"><svg class="car"><use href="#car"/></svg><div class="tb d-flex align-items-center"><span class="cbar" style="background:#e8964a"></span><svg class="eye0"><use href="#eyo"/></svg><svg class="bd0"><use href="#bx"/></svg>edge cubelet (5):1</div></div>
<div class="trow d-flex align-items-center"><svg class="car"><use href="#car"/></svg><div class="tb d-flex align-items-center"><span class="cbar" style="background:#4a55d8"></span><svg class="eye0"><use href="#eyo"/></svg><svg class="bd0"><use href="#bx"/></svg>edge cubelet (6):1</div></div>
<div class="trow d-flex align-items-center"><svg class="car"><use href="#car"/></svg><div class="tb d-flex align-items-center"><span class="cbar" style="background:#e8554a"></span><svg class="eye0"><use href="#eye"/></svg><svg class="bd0"><use href="#bx"/></svg>edge cubelet (7):1</div></div>
<div class="trow d-flex align-items-center"><svg class="car"><use href="#car"/></svg><div class="tb d-flex align-items-center"><span class="cbar" style="background:#f08090"></span><svg class="eye0"><use href="#eye"/></svg><svg class="bd0"><use href="#bx"/></svg>edge cubelet (8):1</div></div>
<div class="trow d-flex align-items-center"><svg class="car"><use href="#car"/></svg><div class="tb d-flex align-items-center"><span class="cbar" style="background:#ffb8a0"></span><svg class="eye0"><use href="#eyo"/></svg><svg class="bd0"><use href="#bx"/></svg>edge cubelet (9):1</div></div>
<div class="trow d-flex align-items-center"><svg class="car"><use href="#car"/></svg><div class="tb d-flex align-items-center"><span class="cbar" style="background:#fff060"></span><svg class="eye0"><use href="#eyo"/></svg><svg class="bd0"><use href="#bx"/></svg>edge cubelet (10):1</div></div>
<div class="trow d-flex align-items-center"><svg class="car"><use href="#car"/></svg><div class="tb d-flex align-items-center"><span class="cbar" style="background:#70d0f8"></span><svg class="eye0"><use href="#eyo"/></svg><svg class="bd0"><use href="#bx"/></svg>edge cubelet (11):1</div></div>
<div class="trow d-flex align-items-center"><svg class="car"><use href="#car"/></svg><div class="tb d-flex align-items-center"><span class="cbar" style="background:#60f060"></span><svg class="eye0"><use href="#eyo"/></svg><svg class="bd0"><use href="#cn"/></svg>corner cubelet (1):1</div></div>
<div class="trow d-flex align-items-center"><svg class="car"><use href="#car"/></svg><div class="tb d-flex align-items-center"><span class="cbar" style="background:#6a50f0"></span><svg class="eye0"><use href="#eye"/></svg><svg class="bd0"><use href="#cn"/></svg>corner cubelet (2):1</div></div>
<div class="trow d-flex align-items-center"><svg class="car"><use href="#car"/></svg><div class="tb d-flex align-items-center"><span class="cbar" style="background:#e090e0"></span><svg class="eye0"><use href="#eye"/></svg><svg class="bd0"><use href="#cn"/></svg>corner cubelet (3):1</div></div>
<div class="trow d-flex align-items-center"><svg class="car"><use href="#car"/></svg><div class="tb d-flex align-items-center"><span class="cbar" style="background:#ffd070"></span><svg class="eye0"><use href="#eyo"/></svg><svg class="bd0"><use href="#cn"/></svg>corner cubelet (4):1</div></div>
<div class="trow d-flex align-items-center"><svg class="car"><use href="#car"/></svg><div class="tb d-flex align-items-center"><span class="cbar" style="background:#b8f060"></span><svg class="eye0"><use href="#eyo"/></svg><svg class="bd0"><use href="#cn"/></svg>corner cubelet (5):1</div></div>
</div>

<div class="panelhd comh d-flex align-items-center">
<span class="flex-grow-1">COMENTARIOS</span>
<svg width="10" height="10" viewBox="0 0 10 10"><circle cx="5" cy="5" r="5" fill="#333"/><path d="M2 5H8M5 2V8" stroke="#fff" stroke-width="1.600"/></svg>
</div>

<div class="palh d-flex align-items-center">
<svg width="10" height="10" viewBox="0 0 10 10"><circle cx="5" cy="5" r="5" fill="#333"/><path d="M2 5H8M5 2V8" stroke="#fff" stroke-width="1.600"/></svg>
<span class="ms-1 flex-grow-1">PALETA DE BOCETO</span>
<svg width="10" height="8" viewBox="0 0 10 8"><path d="M0 0V8L5 4ZM5 0V8L10 4Z" fill="#333"/></svg>
</div>

<div class="navbar3d d-flex align-items-center">
<svg width="237" height="24" viewBox="0 0 237 24">
<path d="M11 3V21M8 6 11 3 14 6" fill="none" stroke="#333"/><ellipse cx="11" cy="13" rx="8" ry="3.500" fill="none" stroke="#333" stroke-width="1.200"/><path d="M5 15 3 17 7 18Z" fill="#333"/>
<path d="M24 10H30L27 14Z" fill="#333"/>
<rect x="36" y="8" width="15" height="14" rx="1" fill="#eee" stroke="#333"/><rect x="39" y="14" width="9" height="4" fill="#999" stroke="#333" stroke-width=".6"/><path d="M38 7 41 3 44 6 47 3 50 7" fill="none" stroke="#333" stroke-width=".8"/>
<path d="M65 21C62 19 60 15 59 11 60 10 61 11 62 13L63 4C64 3 65 4 65 5V10L66 3C67 2 68 3 68 4L68 10 70 4C71 3 72 4 72 5L71 11 73 7C74 6 75 7 75 8 74 13 73 20 71 21Z" fill="#fff" stroke="#333" stroke-width=".9"/>
<circle cx="94" cy="12" r="5.500" fill="#dff" stroke="#333" stroke-width="1.200"/><path d="M98 16 102 20" stroke="#333" stroke-width="2"/><path d="M100 6H106M103 3V9M100 11H106" stroke="#333" stroke-width=".9"/>
<path d="M116 3H134V21H116Z" fill="none" stroke="#555" stroke-dasharray="2 2"/><circle cx="122" cy="10" r="7" fill="#def" stroke="#333" stroke-width="1.200"/><path d="M127 15 132 20" stroke="#333" stroke-width="2"/>
<path d="M134 10H140L137 14Z" fill="#333"/>
<rect x="147" y="3" width="14" height="13" fill="#7fa8d8" stroke="#333"/><rect x="149" y="5" width="10" height="9" fill="#a9c6e8"/><path d="M151 18H157M154 16V19" stroke="#333"/>
<path d="M168 10H174L171 14Z" fill="#333"/>
<rect x="180" y="4" width="16" height="16" fill="#ccc" stroke="#444"/><path d="M183 4V20M186 4V20M189 4V20M192 4V20M180 7H196M180 10H196M180 13H196M180 16H196" stroke="#555" stroke-width=".7"/>
<path d="M201 10H207L204 14Z" fill="#333"/>
<rect x="211" y="5" width="15" height="15" rx="1" fill="#fff" stroke="#2b4a80"/><rect x="212.500" y="6.500" width="5.500" height="5.500" fill="#7fa8d8"/><rect x="219" y="6.500" width="5.500" height="5.500" fill="#7fa8d8"/><rect x="212.500" y="13" width="5.500" height="5.500" fill="#7fa8d8"/><rect x="219" y="13" width="5.500" height="5.500" fill="#7fa8d8"/>
<path d="M229 10H235L232 14Z" fill="#333"/>
</svg>
</div>

<div class="statusx">1 Línea de boceto | Longitud : 0.30 cm</div>
</main>

<footer class="tline d-flex">
<div class="tctl d-flex">
<svg viewBox="0 0 16 16"><path d="M3 2V14H1V2ZM13 2V14L4 8Z" fill="#444"/></svg>
<svg viewBox="0 0 16 16"><path d="M10 3V13L3 8ZM11.500 6H13V10H11.500Z" fill="#444"/></svg>
<svg viewBox="0 0 16 16"><path d="M2 1V15L14 8Z" fill="#444"/></svg>
<svg viewBox="0 0 16 16"><path d="M6 3V13L13 8ZM3 6H4.500V10H3Z" fill="#444"/></svg>
<svg viewBox="0 0 16 16"><path d="M3 2V14L12 8ZM13 2H15V14H13Z" fill="#444"/></svg>
</div>
<div class="ttrack">
<div class="tbars d-flex">
<span class="n6" style="background:#c090f0"></span><span class="n6" style="background:#e792bf"></span><span class="n18" style="background:#e293e3"></span><span class="n10" style="background:#ffb0b0"></span><span class="n8" style="background:#e293e3"></span><span class="n2" style="background:#5b86ee"></span><span class="n2" style="background:#e293e3"></span><span class="n2" style="background:#7255f8"></span><span class="n6" style="background:#e293e3"></span><span class="n2" style="background:#e792bf"></span><span class="n2" style="background:#e293e3"></span><span class="n2" style="background:#5b86ee"></span><span class="n2" style="background:#e293e3"></span><span class="n2" style="background:#f48a96"></span><span class="n2" style="background:#e293e3"></span>
</div>
<div class="ticons d-flex">
<i class="ti"><svg><use href="#tsk"/></svg></i><i class="ti"><svg><use href="#tsp"/></svg></i><i class="ti"><svg><use href="#tsk"/></svg></i><i class="ti"><svg><use href="#tdm"/></svg></i><i class="ti"><svg><use href="#tfl"/></svg></i><i class="ti"><svg><use href="#tst"/></svg></i><i class="ti"><svg><use href="#tsk"/></svg></i><i class="ti"><svg><use href="#tsk"/></svg></i><i class="ti hl"><svg><use href="#tsk"/></svg></i><i class="ti hl"><svg><use href="#tsk"/></svg></i><i class="ti hl"><svg><use href="#tsp"/></svg></i><i class="ti hl"><svg><use href="#tsk"/></svg></i>
<i class="ti"><svg><use href="#tm"/></svg></i><i class="ti"><svg><use href="#tm"/></svg></i><i class="ti"><svg><use href="#tm"/></svg></i><i class="ti"><svg><use href="#tm"/></svg></i><i class="ti"><svg><use href="#tm"/></svg></i><i class="ti"><svg><use href="#tm"/></svg></i><i class="ti"><svg><use href="#tm"/></svg></i><i class="ti"><svg><use href="#tm"/></svg></i><i class="ti"><svg><use href="#tm"/></svg></i><i class="ti"><svg><use href="#tm"/></svg></i><i class="ti"><svg><use href="#tm"/></svg></i><i class="ti"><svg><use href="#tm"/></svg></i><i class="ti"><svg><use href="#tm"/></svg></i><i class="ti"><svg><use href="#tm"/></svg></i><i class="ti"><svg><use href="#tm"/></svg></i><i class="ti"><svg><use href="#tm"/></svg></i><i class="ti"><svg><use href="#tm"/></svg></i>
<i class="ti"><svg><use href="#tst"/></svg></i><i class="ti"><svg><use href="#tsk"/></svg></i><i class="ti"><svg><use href="#tcb"/></svg></i><i class="ti"><svg><use href="#tsk"/></svg></i><i class="ti"><svg><use href="#tex"/></svg></i><i class="ti"><svg><use href="#tex"/></svg></i><i class="ti"><svg><use href="#tex"/></svg></i><i class="ti"><svg><use href="#tex"/></svg></i><i class="ti"><svg><use href="#tex"/></svg></i><i class="ti"><svg><use href="#tex"/></svg></i><i class="ti"><svg><use href="#tfl"/></svg></i><i class="ti"><svg><use href="#tm"/></svg></i><i class="ti"><svg><use href="#tm"/></svg></i><i class="ti"><svg><use href="#tfg"/></svg></i><i class="ti"><svg><use href="#tsp"/></svg></i><i class="ti"><svg><use href="#tsk"/></svg></i><i class="ti"><svg><use href="#tsp"/></svg></i><i class="ti"><svg><use href="#tsk"/></svg></i><i class="ti"><svg><use href="#tsp"/></svg></i><i class="ti hl"><svg><use href="#tsh"/></svg></i><i class="ti"><svg><use href="#tdl"/></svg></i>
<i class="ti"><svg><use href="#tsp"/></svg></i><i class="ti"><svg><use href="#tsk"/></svg></i><i class="ti"><svg><use href="#tex"/></svg></i><i class="ti"><svg><use href="#tfl"/></svg></i><i class="ti"><svg><use href="#tsp"/></svg></i><i class="ti"><svg><use href="#tsk"/></svg></i><i class="ti"><svg><use href="#tex"/></svg></i><i class="ti"><svg><use href="#tfl"/></svg></i><i class="ti"><svg><use href="#tsp"/></svg></i><i class="ti"><svg><use href="#tsk"/></svg></i><i class="ti"><svg><use href="#tex"/></svg></i><i class="ti"><svg><use href="#tfl"/></svg></i><i class="ti"><svg><use href="#tsp"/></svg></i><i class="ti"><svg><use href="#tsk"/></svg></i><i class="ti"><svg><use href="#tex"/></svg></i><i class="ti"><svg><use href="#tfl"/></svg></i><i class="ti"><svg><use href="#tsp"/></svg></i><i class="ti"><svg><use href="#tsk"/></svg></i><i class="ti"><svg><use href="#tex"/></svg></i><i class="ti"><svg><use href="#tfl"/></svg></i><i class="ti"><svg><use href="#tsp"/></svg></i><i class="ti"><svg><use href="#tsk"/></svg></i>
</div>
</div>
<svg class="gearx" viewBox="0 0 16 16"><use href="#gear"/></svg>
<div class="thumb"></div>
<svg class="playh" viewBox="0 0 12 38"><path d="M1 0H11V5L6 10 1 5Z" fill="#555"/><path d="M6 8V38" stroke="#555" stroke-width="1.600"/></svg>
</footer>
<script src="https://cdn.jsdelivr.net/npm/bootstrap@5.3.0/dist/js/bootstrap.bundle.min.js"></script>
</body>
</html>
